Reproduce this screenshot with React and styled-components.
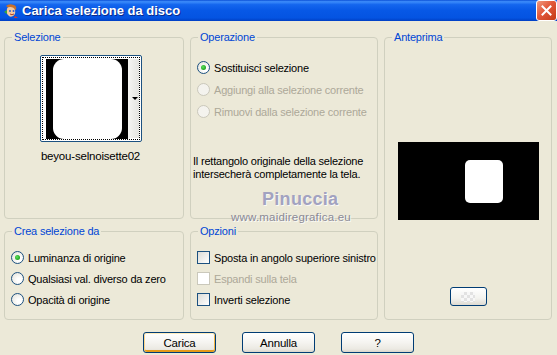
import React from "react";
import styled, { createGlobalStyle } from "styled-components";

const GlobalStyle = createGlobalStyle`
  html, body {
    margin: 0;
    padding: 0;
    background: #ece9d8;
  }
  * { box-sizing: border-box; }
`;

// Window frame

const Window = styled.div`
  position: relative;
  width: 557px;
  height: 355px;
  background: #ece9d8;
  font-family: "Liberation Sans", Arial, sans-serif;
  font-size: 11px;
  letter-spacing: -0.2px;
  color: #000;
  overflow: hidden;
`;

const TitleBar = styled.div`
  height: 21px;
  display: flex;
  align-items: center;
  padding-left: 3px;
  gap: 3px;
  background: linear-gradient(
    180deg,
    #0a4fd6 0%,
    #3d8dfb 8%,
    #1466ee 22%,
    #0758e6 50%,
    #0454e2 85%,
    #003fc4 100%
  );
`;

const TitleText = styled.div`
  flex: 1;
  color: #fff;
  font-family: "Liberation Sans", Arial, sans-serif;
  font-weight: bold;
  font-size: 13px;
  letter-spacing: 0;
  text-shadow: 1px 1px 0 #0a2a8a;
`;

const CloseButton = styled.div`
  width: 21px;
  height: 21px;
  margin-top: 0;
  border: 1px solid #fff;
  border-radius: 3px;
  background: linear-gradient(135deg, #f19a7d 0%, #e2583a 45%, #c43a17 100%);
  display: flex;
  align-items: center;
  justify-content: center;
`;

const Body = styled.div`
  padding: 10px 5px 0 4px;
`;

const Grid = styled.div`
  display: grid;
  grid-template-columns: 180px 188px 168px;
  grid-template-rows: 188px 95px;
  column-gap: 6px;
  row-gap: 6px;
`;

// Group boxes

const Group = styled.fieldset`
  margin: 0;
  padding: 0;
  min-width: 0;
  border: 1px solid #d0d0bf;
  border-radius: 4px;
  display: flex;
  flex-direction: column;
  grid-column: ${(p) => p.$col};
  grid-row: ${(p) => p.$row};
`;

const Legend = styled.legend`
  margin-left: 7px;
  padding: 0 2px;
  color: #0046d5;
  font-size: 11px;
  line-height: 13px;
`;

// Selezione

const SelContent = styled.div`
  display: flex;
  flex-direction: column;
  align-items: center;
  padding: 11px 7px 0 0;
  gap: 8px;
`;

const Combo = styled.div`
  width: 102px;
  height: 87px;
  border: 1px solid #1c5180;
  border-radius: 2px;
  padding: 1px;
  background: #fff;
`;

const FocusRect = styled.div`
  height: 100%;
  border: 1px dotted #000;
  display: flex;
  padding: 1px 0 1px 3px;
`;

const DropStrip = styled.div`
  flex: 1;
  background: linear-gradient(90deg, #f6f6f4 0%, #e4e4e0 100%);
  display: flex;
  align-items: center;
  justify-content: flex-end;
  padding-right: 1px;
`;

const Arrow = styled.div`
  width: 0;
  height: 0;
  border-left: 3px solid transparent;
  border-right: 3px solid transparent;
  border-top: 3px solid #000;
`;

const FileName = styled.div`
  font-size: 11.5px;
`;

// Radios and checkboxes

const OptionList = styled.div`
  display: flex;
  flex-direction: column;
  gap: ${(p) => p.$gap}px;
  padding: ${(p) => p.$top}px 0 0 ${(p) => p.$left}px;
`;

const Row = styled.div`
  height: 15px;
  display: flex;
  align-items: center;
  gap: 4px;
  color: ${(p) => (p.$disabled ? "#aca899" : "#000")};
  white-space: nowrap;
`;

const Radio = styled.span`
  width: 13px;
  height: 13px;
  border-radius: 50%;
  border: 1px solid ${(p) => (p.$disabled ? "#cac8bb" : "#1c5180")};
  background: ${(p) =>
    p.$disabled
      ? "#f4f3ee"
      : "radial-gradient(circle at 65% 65%, #ffffff 20%, #ecebe5 70%, #d6d3c4 100%)"};
  display: flex;
  align-items: center;
  justify-content: center;
  flex-shrink: 0;
  &::after {
    content: "";
    display: ${(p) => (p.$checked ? "block" : "none")};
    width: 5px;
    height: 5px;
    border-radius: 50%;
    background: radial-gradient(circle at 40% 40%, #5ce35c 0%, #21a121 70%);
  }
`;

const Check = styled.span`
  width: 13px;
  height: 13px;
  border: 1px solid ${(p) => (p.$disabled ? "#cac8bb" : "#1c5180")};
  background: ${(p) =>
    p.$disabled ? "#ffffff" : "linear-gradient(135deg, #dcdcd7 0%, #ffffff 100%)"};
  flex-shrink: 0;
`;

const Note = styled.div`
  margin: 36px 0 0 2px;
  line-height: 13px;
`;

// Anteprima

const PreviewContent = styled.div`
  display: flex;
  flex-direction: column;
  align-items: center;
  padding-top: 98px;
`;

const SmallButton = styled.div`
  margin-top: 67px;
  width: 37px;
  height: 19px;
  border: 1px solid #003c74;
  border-radius: 3px;
  background: linear-gradient(180deg, #ffffff 0%, #f3f3ef 60%, #dedbd2 100%);
  display: flex;
  align-items: center;
  justify-content: center;
`;

const Checker = styled.span`
  width: 14px;
  height: 10px;
  background: repeating-conic-gradient(#e2e2e2 0% 25%, #f7f7f7 0% 50%) 0 0 / 6px 6px;
`;

// Footer buttons

const ButtonRow = styled.div`
  display: flex;
  justify-content: center;
  gap: 26px;
  margin-top: 12px;
  padding-left: 1px;
`;

const Button = styled.div`
  width: 73px;
  height: 21px;
  border: 1px solid #003c74;
  border-radius: 3px;
  background: linear-gradient(180deg, #ffffff 0%, #f5f4f0 50%, #ebe9e2 85%, #d9d5ca 100%);
  display: flex;
  align-items: center;
  justify-content: center;
  font-size: 11.5px;
  box-shadow: ${(p) =>
    p.$default ? "inset 0 1px 0 #ffecbd, inset 1px 0 0 #fbd58a, inset -1px 0 0 #f2b545, inset 0 -2px 0 #e59b1a" : "none"};
`;

// Watermark

const Watermark = styled.div`
  position: absolute;
  left: ${(p) => p.$x}px;
  top: ${(p) => p.$y}px;
  font-family: "Liberation Sans", Arial, sans-serif;
  font-size: ${(p) => p.$size}px;
  font-weight: ${(p) => (p.$bold ? "bold" : "normal")};
  color: ${(p) => p.$color};
  letter-spacing: ${(p) => p.$spacing}px;
  line-height: 1.1;
  text-shadow: 1px 1px 0 rgba(255, 255, 255, 0.8);
  pointer-events: none;
`;

const AppIcon = () => (
  <svg width="16" height="16" viewBox="0 0 16 16">
    <path d="M3 3 Q6 0 11 2 Q14 3 13 7 L11 6 Q9 4 6 5 Z" fill="#c9702a" />
    <path d="M4 6 Q4 4 7 4 Q11 4 12 7 Q13 11 10 13 Q7 15 5 12 Q3 10 4 6 Z" fill="#f3c9a0" />
    <circle cx="7" cy="8" r="1" fill="#2a5bd0" />
    <circle cx="10.5" cy="8" r="1" fill="#2a5bd0" />
    <path d="M7 11 Q9 12.5 11 11" stroke="#b0402a" strokeWidth="1" fill="none" />
    <path d="M1 9 L4 7 L4 11 Z" fill="#3aa83a" />
    <path d="M12 13 L15 15 L11 15 Z" fill="#d93a2a" />
  </svg>
);

const CloseX = () => (
  <svg width="11" height="11" viewBox="0 0 11 11">
    <path d="M1.5 1.5 L9.5 9.5 M9.5 1.5 L1.5 9.5" stroke="#fff" strokeWidth="2" strokeLinecap="square" />
  </svg>
);

const Thumb = () => (
  <svg width="82" height="80" viewBox="0 0 82 80">
    <rect width="82" height="80" fill="#000" />
    <rect x="7" y="0" width="69" height="80" rx="11" fill="#fff" />
  </svg>
);

const Preview = () => (
  <svg width="141" height="78" viewBox="0 0 141 78">
    <rect width="141" height="78" fill="#000" />
    <rect x="67" y="18" width="38" height="43" rx="5" fill="#fff" />
  </svg>
);

const operations = [
  { label: "Sostituisci selezione", checked: true },
  { label: "Aggiungi alla selezione corrente", disabled: true },
  { label: "Rimuovi dalla selezione corrente", disabled: true },
];

const sources = [
  { label: "Luminanza di origine", checked: true },
  { label: "Qualsiasi val. diverso da zero" },
  { label: "Opacità di origine" },
];

const options = [
  { label: "Sposta in angolo superiore sinistro" },
  { label: "Espandi sulla tela", disabled: true },
  { label: "Inverti selezione" },
];

const App = () => {
  return (
    <Window>
      <GlobalStyle />
      <TitleBar>
        <AppIcon />
        <TitleText>Carica selezione da disco</TitleText>
        <CloseButton>
          <CloseX />
        </CloseButton>
      </TitleBar>

      <Body>
        <Grid>
          <Group $col="1" $row="1">
            <Legend>Selezione</Legend>
            <SelContent>
              <Combo>
                <FocusRect>
                  <Thumb />
                  <DropStrip>
                    <Arrow />
                  </DropStrip>
                </FocusRect>
              </Combo>
              <FileName>beyou-selnoisette02</FileName>
            </SelContent>
          </Group>

          <Group $col="2" $row="1">
            <Legend>Operazione</Legend>
            <OptionList $gap={7} $top={16} $left={6}>
              {operations.map((o) => (
                <Row key={o.label} $disabled={o.disabled}>
                  <Radio $checked={o.checked} $disabled={o.disabled} />
                  {o.label}
                </Row>
              ))}
            </OptionList>
            <Note>
              Il rettangolo originale della selezione
              <br />
              intersecherà completamente la tela.
            </Note>
          </Group>

          <Group $col="3" $row="1 / span 2">
            <Legend>Anteprima</Legend>
            <PreviewContent>
              <Preview />
              <SmallButton>
                <Checker />
              </SmallButton>
            </PreviewContent>
          </Group>

          <Group $col="1" $row="2">
            <Legend>Crea selezione da</Legend>
            <OptionList $gap={6} $top={12} $left={6}>
              {sources.map((o) => (
                <Row key={o.label}>
                  <Radio $checked={o.checked} />
                  {o.label}
                </Row>
              ))}
            </OptionList>
          </Group>

          <Group $col="2" $row="2">
            <Legend>Opzioni</Legend>
            <OptionList $gap={6} $top={12} $left={6}>
              {options.map((o) => (
                <Row key={o.label} $disabled={o.disabled}>
                  <Check $disabled={o.disabled} />
                  {o.label}
                </Row>
              ))}
            </OptionList>
          </Group>
        </Grid>

        <ButtonRow>
          <Button $default>Carica</Button>
          <Button>Annulla</Button>
          <Button>?</Button>
        </ButtonRow>
      </Body>

      <Watermark $x={262} $y={190} $size={18} $bold $color="#a2a2c0" $spacing={0.3}>
        Pinuccia
      </Watermark>
      <Watermark $x={231} $y={211} $size={11.5} $color="#8a8a96" $spacing={0.2}>
        www.maidiregrafica.eu
      </Watermark>
    </Window>
  );
};

export default App;
